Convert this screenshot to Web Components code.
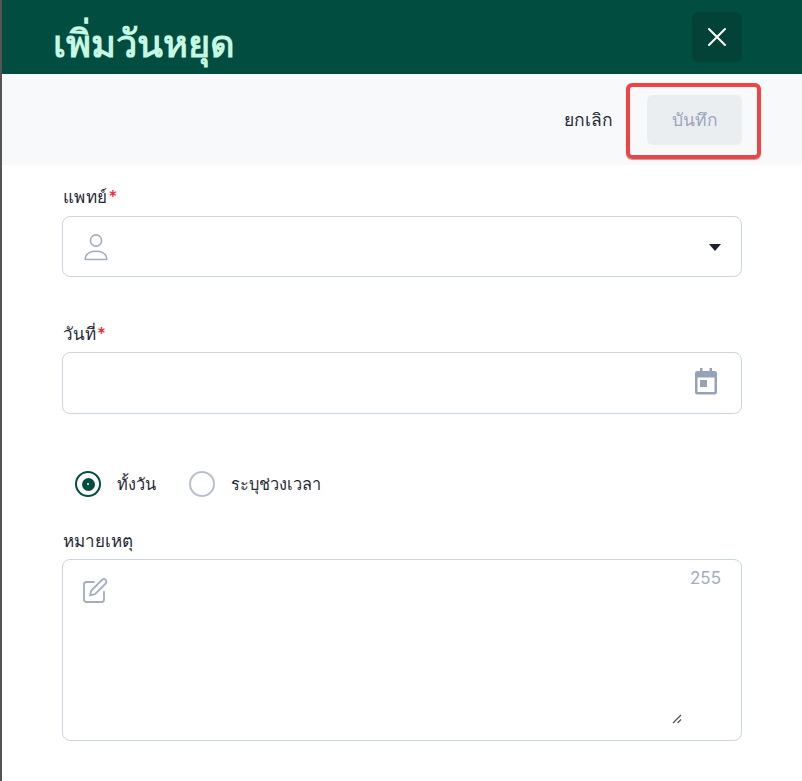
<!DOCTYPE html>
<html lang="th"><head><meta charset="utf-8">
<style>
html,body{margin:0;padding:0;background:#fff;height:100%;overflow:hidden}
body{font-family:Inter,"Noto Sans",sans-serif;color:#1f2937}
</style></head><body>
<leave-dialog></leave-dialog>
<template id="t-field">
<style>
:host{display:block;padding:0 60px 0 60px}
.l{display:block;font-size:17px;line-height:20px;height:20px;color:#1f2937;font-weight:500;padding-left:1px}
.r{color:#f0243c;padding-left:1px}
.box{box-sizing:border-box;height:var(--h,61px);border:1px solid #cbd5e0;border-radius:8px;background:#fff;display:flex;align-items:flex-start;position:relative;margin-top:var(--gap,8px)}
</style>
<label class="l"><slot name="label"></slot><span class="r" id="req">*</span></label>
<div class="box"><slot></slot></div>
</template>
<script>
class LeaveField extends HTMLElement{constructor(){super();const s=this.attachShadow({mode:'open'});s.appendChild(document.getElementById('t-field').content.cloneNode(true));if(!this.hasAttribute('required'))s.getElementById('req').remove();}}
customElements.define('leave-field',LeaveField);
class RadioOpt extends HTMLElement{constructor(){super();const s=this.attachShadow({mode:'open'});const on=this.hasAttribute('checked');s.innerHTML=`<style>:host{display:inline-flex;align-items:center;gap:16px;font-size:16.300px;color:#1f2937;font-weight:500}
.c{box-sizing:border-box;width:26px;height:26px;border-radius:50%;border:2.500px solid ${on?'#014d40':'#b8c0cc'};display:flex;align-items:center;justify-content:center}
.c i{display:${on?'flex':'none'};width:13px;height:13px;border-radius:50%;background:#014d40;align-items:center;justify-content:center}
.c b{width:2px;height:2px;border-radius:50%;background:#fff}</style><span class="c"><i><b></b></i></span><span><slot></slot></span>`;}}
customElements.define('radio-opt',RadioOpt);
class LeaveDialog extends HTMLElement{constructor(){super();const s=this.attachShadow({mode:'open'});s.innerHTML=`<style>
:host{display:flex;height:781px;width:802px;position:relative;overflow:hidden}
.edge{width:2px;background:#555;flex:none}
.main{flex:1;min-width:0;display:flex;flex-direction:column}
header{height:74px;background:#014d40;display:flex;align-items:center;justify-content:space-between;padding:0 60px 0 51px;flex:none}
h1{margin:0;font-size:38px;font-weight:600;color:#c6f7e2;line-height:74px;height:74px;padding-top:6px;box-sizing:border-box}
.x{width:50px;height:50px;border-radius:6px;background:#024237;display:flex;align-items:center;justify-content:center}
.bar{height:91px;background:#f8f9fb;display:flex;align-items:center;justify-content:flex-end;padding:0 60px 0 0;gap:34px;flex:none}
.cancel{font-size:17.500px;font-weight:500;color:#1f2937}
.save{width:95px;height:50px;border-radius:6px;background:#ebeef1;color:#98a6bd;font-size:17.500px;font-weight:500;display:flex;align-items:center;justify-content:center}
.form{display:flex;flex-direction:column;padding-top:22px}
.ic{margin:16px 0 0 20px;display:block}
.cal{margin:14px 23px 0 auto;display:block}
.caret{position:absolute;right:20px;top:27px;width:0;height:0;border:6.5px solid transparent;border-top:7px solid #1a202c;border-bottom:0}
.radios{display:flex;gap:33px;padding:0 0 0 73px;margin-top:57px;height:26px;align-items:center}
.count{position:absolute;right:20px;top:8px;font-size:17px;color:#a0aec0;line-height:20px}
.rz{position:absolute;right:59px;bottom:16px}
.pen{margin:18px 0 0 19px;display:block}
.mark{position:absolute;left:626px;top:83px;width:135px;height:76px;box-sizing:border-box;border:4px solid #ef4444;border-radius:6px;box-shadow:0 1px 1px rgba(0,0,0,.35);pointer-events:none}
</style>
<div class="edge"></div>
<div class="main">
<header><h1>เพิ่มวันหยุด</h1><div class="x"><svg width="20" height="20" viewBox="0 0 20 20" fill="none" stroke="#fff" stroke-width="2" stroke-linecap="round"><path d="M2 2L18 18M18 2L2 18"/></svg></div></header>
<div class="bar"><span class="cancel">ยกเลิก</span><span class="save">บันทึก</span></div>
<div class="form">
<leave-field required style="--h:61px;--gap:9px"><span slot="label" style="letter-spacing:.4px">แพทย์</span>
<svg class="ic" width="26" height="28" viewBox="0 0 26 28" fill="none" stroke="#a0aec0" stroke-width="1.6"><circle cx="13" cy="7.5" r="5.6"/><path d="M2.2 26.5c0-1 0-2 .5-3 1.3-3 4.6-5.2 10.300-5.200s9 2.200 10.300 5.200c.5 1 .5 2 .5 3z" stroke-linejoin="round"/></svg>
<span class="caret"></span></leave-field>
<leave-field required style="--h:62px;margin-top:47px"><span slot="label">วันที่</span>
<svg class="cal" width="24" height="28" viewBox="0 0 24 28"><path fill="#94a3b8" fill-rule="evenodd" d="M6 1h2.500v3h7V1H18v3h2.500A2.500 2.500 0 0 1 23 6.500v18.500a2.500 2.500 0 0 1-2.500 2.500h-17A2.500 2.500 0 0 1 1 25V6.500A2.500 2.500 0 0 1 3.500 4H6zM3.500 10.500V25h17V10.500z"/><rect x="6" y="13" width="7" height="7" fill="#94a3b8"/></svg></leave-field>
<div class="radios"><radio-opt checked>ทั้งวัน</radio-opt><radio-opt>ระบุช่วงเวลา</radio-opt></div>
<leave-field style="--h:182px;margin-top:34px"><span slot="label">หมายเหตุ</span>
<svg class="pen" width="26" height="26" viewBox="0 0 26 26" fill="none" stroke="#a0aec0" stroke-width="1.800" stroke-linecap="round" stroke-linejoin="round"><path d="M12 4H4.500A2.500 2.500 0 0 0 2 6.500v15A2.500 2.500 0 0 0 4.500 24h15a2.500 2.500 0 0 0 2.500-2.500V14"/><path d="M20 1.800a2.600 2.600 0 0 1 3.700 3.700L13 16.200l-5 1.300 1.300-5z"/></svg>
<span class="count">255</span>
<svg class="rz" width="10" height="10" viewBox="0 0 10 10" stroke="#555" stroke-width="1.300" fill="none"><path d="M1 9L9 1M5.500 9L9 5.500"/></svg>
</leave-field>
</div></div>
<div class="mark"></div>`;}}
customElements.define('leave-dialog',LeaveDialog);
</script>
</body></html>
